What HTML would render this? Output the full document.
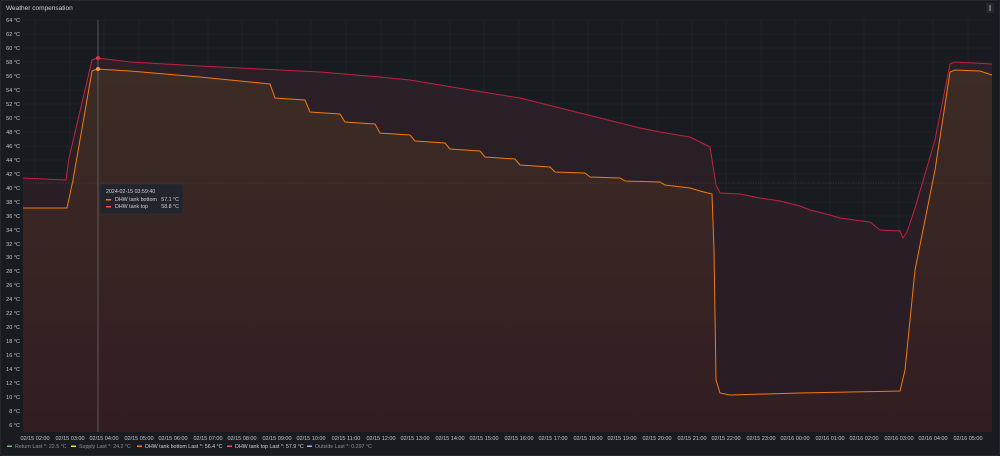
<!DOCTYPE html>
<html><head><style>
body{margin:0;background:#111217;width:1000px;height:456px;overflow:hidden;font-family:"Liberation Sans",sans-serif}
.p{position:absolute;left:0;top:0;width:998px;height:454px;background:#181b1f;border:1px solid #24272d;border-radius:2px}
</style></head><body>
<div class="p"></div>
<svg width="1000" height="456" style="position:absolute;left:0;top:0" font-family="Liberation Sans, sans-serif">
<defs>
<linearGradient id="go" x1="0" y1="0" x2="0" y2="1"><stop offset="0" stop-color="#3d2c25"/><stop offset="1" stop-color="#321d22"/></linearGradient>
<linearGradient id="gr" x1="0" y1="0" x2="0" y2="1"><stop offset="0" stop-color="#2b2027"/><stop offset="1" stop-color="#2a1c25"/></linearGradient>
</defs>
<text x="6" y="10" font-size="6.5" fill="#d0d2d6">Weather compensation</text>
<rect x="986" y="3" width="8" height="10" fill="#24272d" rx="1"/><rect x="989.5" y="5" width="1" height="6" fill="#aaa"/>
<g stroke="#262930" stroke-width="0.6">
<path d="M23 20H992M23 34H992M23 48H992M23 62H992M23 76H992M23 90H992M23 104H992M23 118H992M23 132H992M23 146H992M23 160H992M23 174H992M23 188H992M23 202H992M23 216H992M23 230H992M23 244H992M23 257H992M23 271H992M23 285H992M23 299H992M23 313H992M23 327H992M23 341H992M23 355H992M23 369H992M23 383H992M23 397H992M23 411H992M23 425H992"/>
<path d="M35 20V432M70 20V432M104 20V432M139 20V432M173 20V432M208 20V432M242 20V432M277 20V432M311 20V432M346 20V432M381 20V432M415 20V432M450 20V432M484 20V432M519 20V432M553 20V432M588 20V432M622 20V432M657 20V432M692 20V432M726 20V432M761 20V432M795 20V432M830 20V432M864 20V432M899 20V432M933 20V432M968 20V432"/>
</g>
<path d="M23 178L66 180L69 158L92 60L97 58L130 62L200 66L260 69L320 72L380 77L410 80L440 85L470 90L520 98L560 108L600 118L640 128L660 132L690 137L710 147L716 185L720 193L740 194L760 198L780 201L800 206L810 210L830 215L840 218L870 222L880 230L900 231L903 238L907 232L915 208L935 140L950 64L955 62L992 64L992 432L23 432Z" fill="url(#gr)"/>
<path d="M23 208L67 208L73 180L92 71L97 69L130 71L200 77L270 84L275 98L305 100L310 112L340 114L345 122L375 124L380 133L410 135L415 141L445 143L450 149L480 151L485 157L515 159L520 165L550 167L555 172L585 173L590 177L620 178L625 181L660 182L665 185L690 188L700 191L712 194L714 250L716 380L720 393L730 395L800 393L850 392L900 391L905 370L915 270L935 170L950 72L955 70L980 71L992 75L992 432L23 432Z" fill="url(#go)"/>
<path d="M23 178L66 180L69 158L92 60L97 58L130 62L200 66L260 69L320 72L380 77L410 80L440 85L470 90L520 98L560 108L600 118L640 128L660 132L690 137L710 147L716 185L720 193L740 194L760 198L780 201L800 206L810 210L830 215L840 218L870 222L880 230L900 231L903 238L907 232L915 208L935 140L950 64L955 62L992 64" fill="none" stroke="#c4213f" stroke-width="1"/>
<path d="M23 208L67 208L73 180L92 71L97 69L130 71L200 77L270 84L275 98L305 100L310 112L340 114L345 122L375 124L380 133L410 135L415 141L445 143L450 149L480 151L485 157L515 159L520 165L550 167L555 172L585 173L590 177L620 178L625 181L660 182L665 185L690 188L700 191L712 194L714 250L716 380L720 393L730 395L800 393L850 392L900 391L905 370L915 270L935 170L950 72L955 70L980 71L992 75" fill="none" stroke="#f2790f" stroke-width="1"/>
<line x1="98" y1="20" x2="98" y2="432" stroke="#6d6f75" stroke-width="0.7"/>
<line x1="23" y1="183" x2="992" y2="183" stroke="#555" stroke-width="0.5" stroke-dasharray="1,1.5"/>
<circle cx="98" cy="58" r="2" fill="#e02f44"/><circle cx="98" cy="69" r="2" fill="#ff9830"/>
<g font-size="5.5" fill="#c7c9cd" text-anchor="end">
<text x="20" y="22">64 °C</text><text x="20" y="36">62 °C</text><text x="20" y="50">60 °C</text><text x="20" y="64">58 °C</text><text x="20" y="78">56 °C</text><text x="20" y="92">54 °C</text><text x="20" y="106">52 °C</text><text x="20" y="120">50 °C</text><text x="20" y="134">48 °C</text><text x="20" y="148">46 °C</text><text x="20" y="162">44 °C</text><text x="20" y="176">42 °C</text><text x="20" y="190">40 °C</text><text x="20" y="204">38 °C</text><text x="20" y="218">36 °C</text><text x="20" y="232">34 °C</text><text x="20" y="246">32 °C</text><text x="20" y="259">30 °C</text><text x="20" y="273">28 °C</text><text x="20" y="287">26 °C</text><text x="20" y="301">24 °C</text><text x="20" y="315">22 °C</text><text x="20" y="329">20 °C</text><text x="20" y="343">18 °C</text><text x="20" y="357">16 °C</text><text x="20" y="371">14 °C</text><text x="20" y="385">12 °C</text><text x="20" y="399">10 °C</text><text x="20" y="413">8 °C</text><text x="20" y="427">6 °C</text>
</g>
<g font-size="5.5" fill="#c7c9cd" text-anchor="middle">
<text x="35" y="440">02/15 02:00</text><text x="70" y="440">02/15 03:00</text><text x="104" y="440">02/15 04:00</text><text x="139" y="440">02/15 05:00</text><text x="173" y="440">02/15 06:00</text><text x="208" y="440">02/15 07:00</text><text x="242" y="440">02/15 08:00</text><text x="277" y="440">02/15 09:00</text><text x="311" y="440">02/15 10:00</text><text x="346" y="440">02/15 11:00</text><text x="381" y="440">02/15 12:00</text><text x="415" y="440">02/15 13:00</text><text x="450" y="440">02/15 14:00</text><text x="484" y="440">02/15 15:00</text><text x="519" y="440">02/15 16:00</text><text x="553" y="440">02/15 17:00</text><text x="588" y="440">02/15 18:00</text><text x="622" y="440">02/15 19:00</text><text x="657" y="440">02/15 20:00</text><text x="692" y="440">02/15 21:00</text><text x="726" y="440">02/15 22:00</text><text x="761" y="440">02/15 23:00</text><text x="795" y="440">02/16 00:00</text><text x="830" y="440">02/16 01:00</text><text x="864" y="440">02/16 02:00</text><text x="899" y="440">02/16 03:00</text><text x="933" y="440">02/16 04:00</text><text x="968" y="440">02/16 05:00</text>
</g>
<g font-size="5.3">
<rect x="7" y="445.5" width="5" height="1.5" fill="#73bf69"/><text x="15" y="448" fill="#8e9096">Return  Last *: 22.5 °C</text>
<rect x="71" y="445.5" width="5" height="1.5" fill="#fade2a"/><text x="79" y="448" fill="#8e9096">Supply  Last *: 24.2 °C</text>
<rect x="137" y="445.5" width="5" height="1.5" fill="#ff780a"/><text x="145" y="448" fill="#d0d2d6">DHW tank bottom   Last *: 56.4 °C</text>
<rect x="227" y="445.5" width="5" height="1.5" fill="#f2495c"/><text x="235" y="448" fill="#d0d2d6">DHW tank top   Last *: 57.9 °C</text>
<rect x="307" y="445.5" width="5" height="1.5" fill="#8ab8ff"/><text x="315" y="448" fill="#8e9096">Outside  Last *: 0.297 °C</text>
</g>
<rect x="100" y="184" width="83" height="30" rx="2" fill="#22252b" stroke="#2f3238" stroke-width="0.5"/>
<g font-size="5.3" fill="#d0d2d6">
<text x="106" y="193">2024-02-15 03:59:40</text>
<rect x="106" y="199" width="5" height="1.5" fill="#ff780a"/><text x="115" y="201">DHW tank bottom</text><text x="179" y="201" text-anchor="end">57.1 °C</text>
<rect x="106" y="206" width="5" height="1.5" fill="#f2495c"/><text x="115" y="208">DHW tank top</text><text x="179" y="208" text-anchor="end">58.8 °C</text>
</g>
</svg>
</body></html>
